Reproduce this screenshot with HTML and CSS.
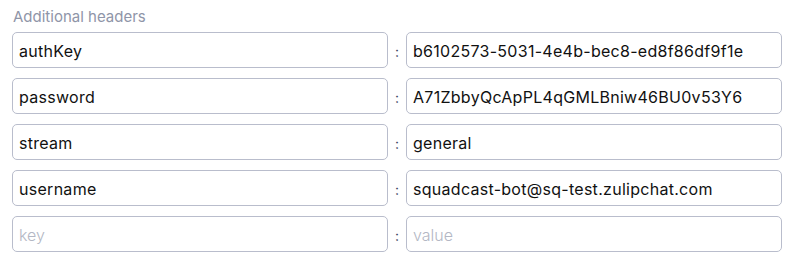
FILE: index.html
```html
<!DOCTYPE html>
<html>
<head>
<meta charset="utf-8">
<link rel="stylesheet" href="styles.css">
</head>
<body>
<div class="headers">
  <div class="title">Additional headers</div>
  <div class="rows">
    <div class="row">
      <input class="field" type="text" value="authKey">
      <span class="sep">:</span>
      <input class="field" type="text" value="b6102573-5031-4e4b-bec8-ed8f86df9f1e">
    </div>
    <div class="row">
      <input class="field" type="text" value="password">
      <span class="sep">:</span>
      <input class="field" type="text" value="A71ZbbyQcApPL4qGMLBniw46BU0v53Y6">
    </div>
    <div class="row">
      <input class="field" type="text" value="stream">
      <span class="sep">:</span>
      <input class="field" type="text" value="general">
    </div>
    <div class="row">
      <input class="field" type="text" value="username">
      <span class="sep">:</span>
      <input class="field" type="text" value="squadcast-bot@sq-test.zulipchat.com">
    </div>
    <div class="row">
      <input class="field" type="text" placeholder="key">
      <span class="sep">:</span>
      <input class="field" type="text" placeholder="value">
    </div>
  </div>
</div>
</body>
</html>
```
FILE: styles.css
```css
html, body {
  margin: 0;
  padding: 0;
  background: #ffffff;
}
body {
  font-family: Inter, "Noto Sans", sans-serif;
}
.headers {
  padding: 7px 15px 0 12px;
}
.title {
  font-size: 15px;
  line-height: 19px;
  color: #8f95a8;
  padding-left: 1px;
  margin-bottom: 6px;
}
.rows {
  display: flex;
  flex-direction: column;
  gap: 10px;
}
.row {
  display: grid;
  grid-template-columns: 1fr 18px 1fr;
  align-items: center;
}
.field {
  box-sizing: border-box;
  width: 100%;
  height: 36px;
  margin: 0;
  padding: 2px 6px 0;
  border: 1px solid #b9bdcc;
  border-radius: 5px;
  font-family: Inter, "Noto Sans", sans-serif;
  font-size: 16px;
  letter-spacing: 0.28px;
  color: #111111;
  background: #ffffff;
  outline: none;
}
.field::placeholder {
  color: #b3b7c4;
  font-weight: 300;
  letter-spacing: 0;
}
.sep {
  text-align: center;
  font-size: 14px;
  color: #3c4663;
  padding-top: 3px;
}
```
